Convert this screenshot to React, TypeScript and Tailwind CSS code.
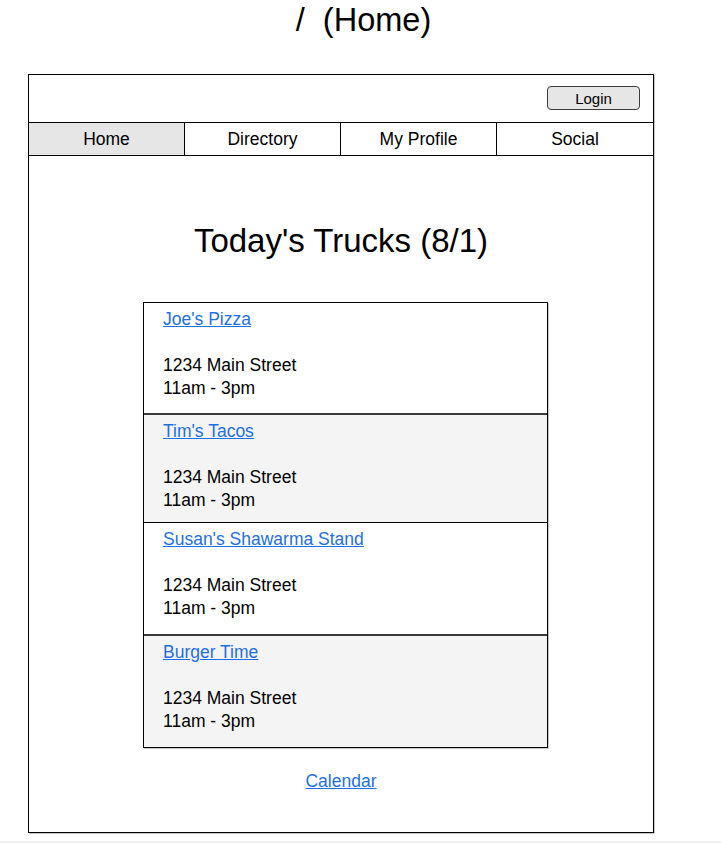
const trucks = [
  { name: "Joe's Pizza", shade: false, h: 'h-[112px]', line: 'border-b-2 border-[#3a3a3a]' },
  { name: "Tim's Tacos", shade: true, h: 'h-[108px]', line: 'border-b border-black' },
  { name: "Susan's Shawarma Stand", shade: false, h: 'h-[113px]', line: 'border-b-2 border-[#3a3a3a]' },
  { name: 'Burger Time', shade: true, h: 'h-[111px]', line: '' },
]

const tabs = ['Home', 'Directory', 'My Profile', 'Social']

export default function App() {
  return (
    <div className="h-[843px] overflow-hidden bg-white text-black font-['Liberation_Sans',Arial,sans-serif]">
      <div className="h-[74px] pt-[2px] pl-[6px] text-center text-[32.5px] leading-[36px]">
        /&nbsp; (Home)
      </div>

      <div className="ml-[28px] w-[626px] h-[759px] border border-black shadow-[1px_1px_0_#c8c8c8]">
        <div className="h-[48px] border-b border-black flex justify-end items-start pt-[11px] pr-[13px]">
          <button className="w-[93px] h-[24px] rounded-[4px] border border-[#3c3c3c] bg-[#e6e6e6] text-[15px] leading-none">
            Login
          </button>
        </div>

        <div className="grid grid-cols-4 h-[33px] border-b border-black text-[17.5px]">
          {tabs.map((t, i) => (
            <div
              key={t}
              className={`flex items-center justify-center ${i < 3 ? 'border-r border-black' : ''} ${i === 0 ? 'bg-[#e6e6e6]' : ''}`}
            >
              {t}
            </div>
          ))}
        </div>

        <h1 className="mt-[66px] text-center text-[33px] leading-[37px]">Today's Trucks (8/1)</h1>

        <div className="mt-[43px] ml-[114px] w-[405px] border border-black shadow-[1px_1px_0_#c8c8c8]">
          {trucks.map(t => (
            <div
              key={t.name}
              className={`${t.h} ${t.line} ${t.shade ? 'bg-[#f4f4f4]' : 'bg-white'} pl-[19px] pt-[5px] text-[17.5px] leading-[23px]`}
            >
              <a href="#" className="text-[#1f6fe6] underline">
                {t.name}
              </a>
              <br />
              <br />
              1234 Main Street
              <br />
              11am - 3pm
            </div>
          ))}
        </div>

        <div className="mt-[22px] text-center text-[17.5px] leading-[23px]">
          <a href="#" className="text-[#1f6fe6] underline">
            Calendar
          </a>
        </div>
      </div>

      <div className="h-[8px]" />
      <div className="h-[10px] bg-[#efefef]" />
    </div>
  )
}
